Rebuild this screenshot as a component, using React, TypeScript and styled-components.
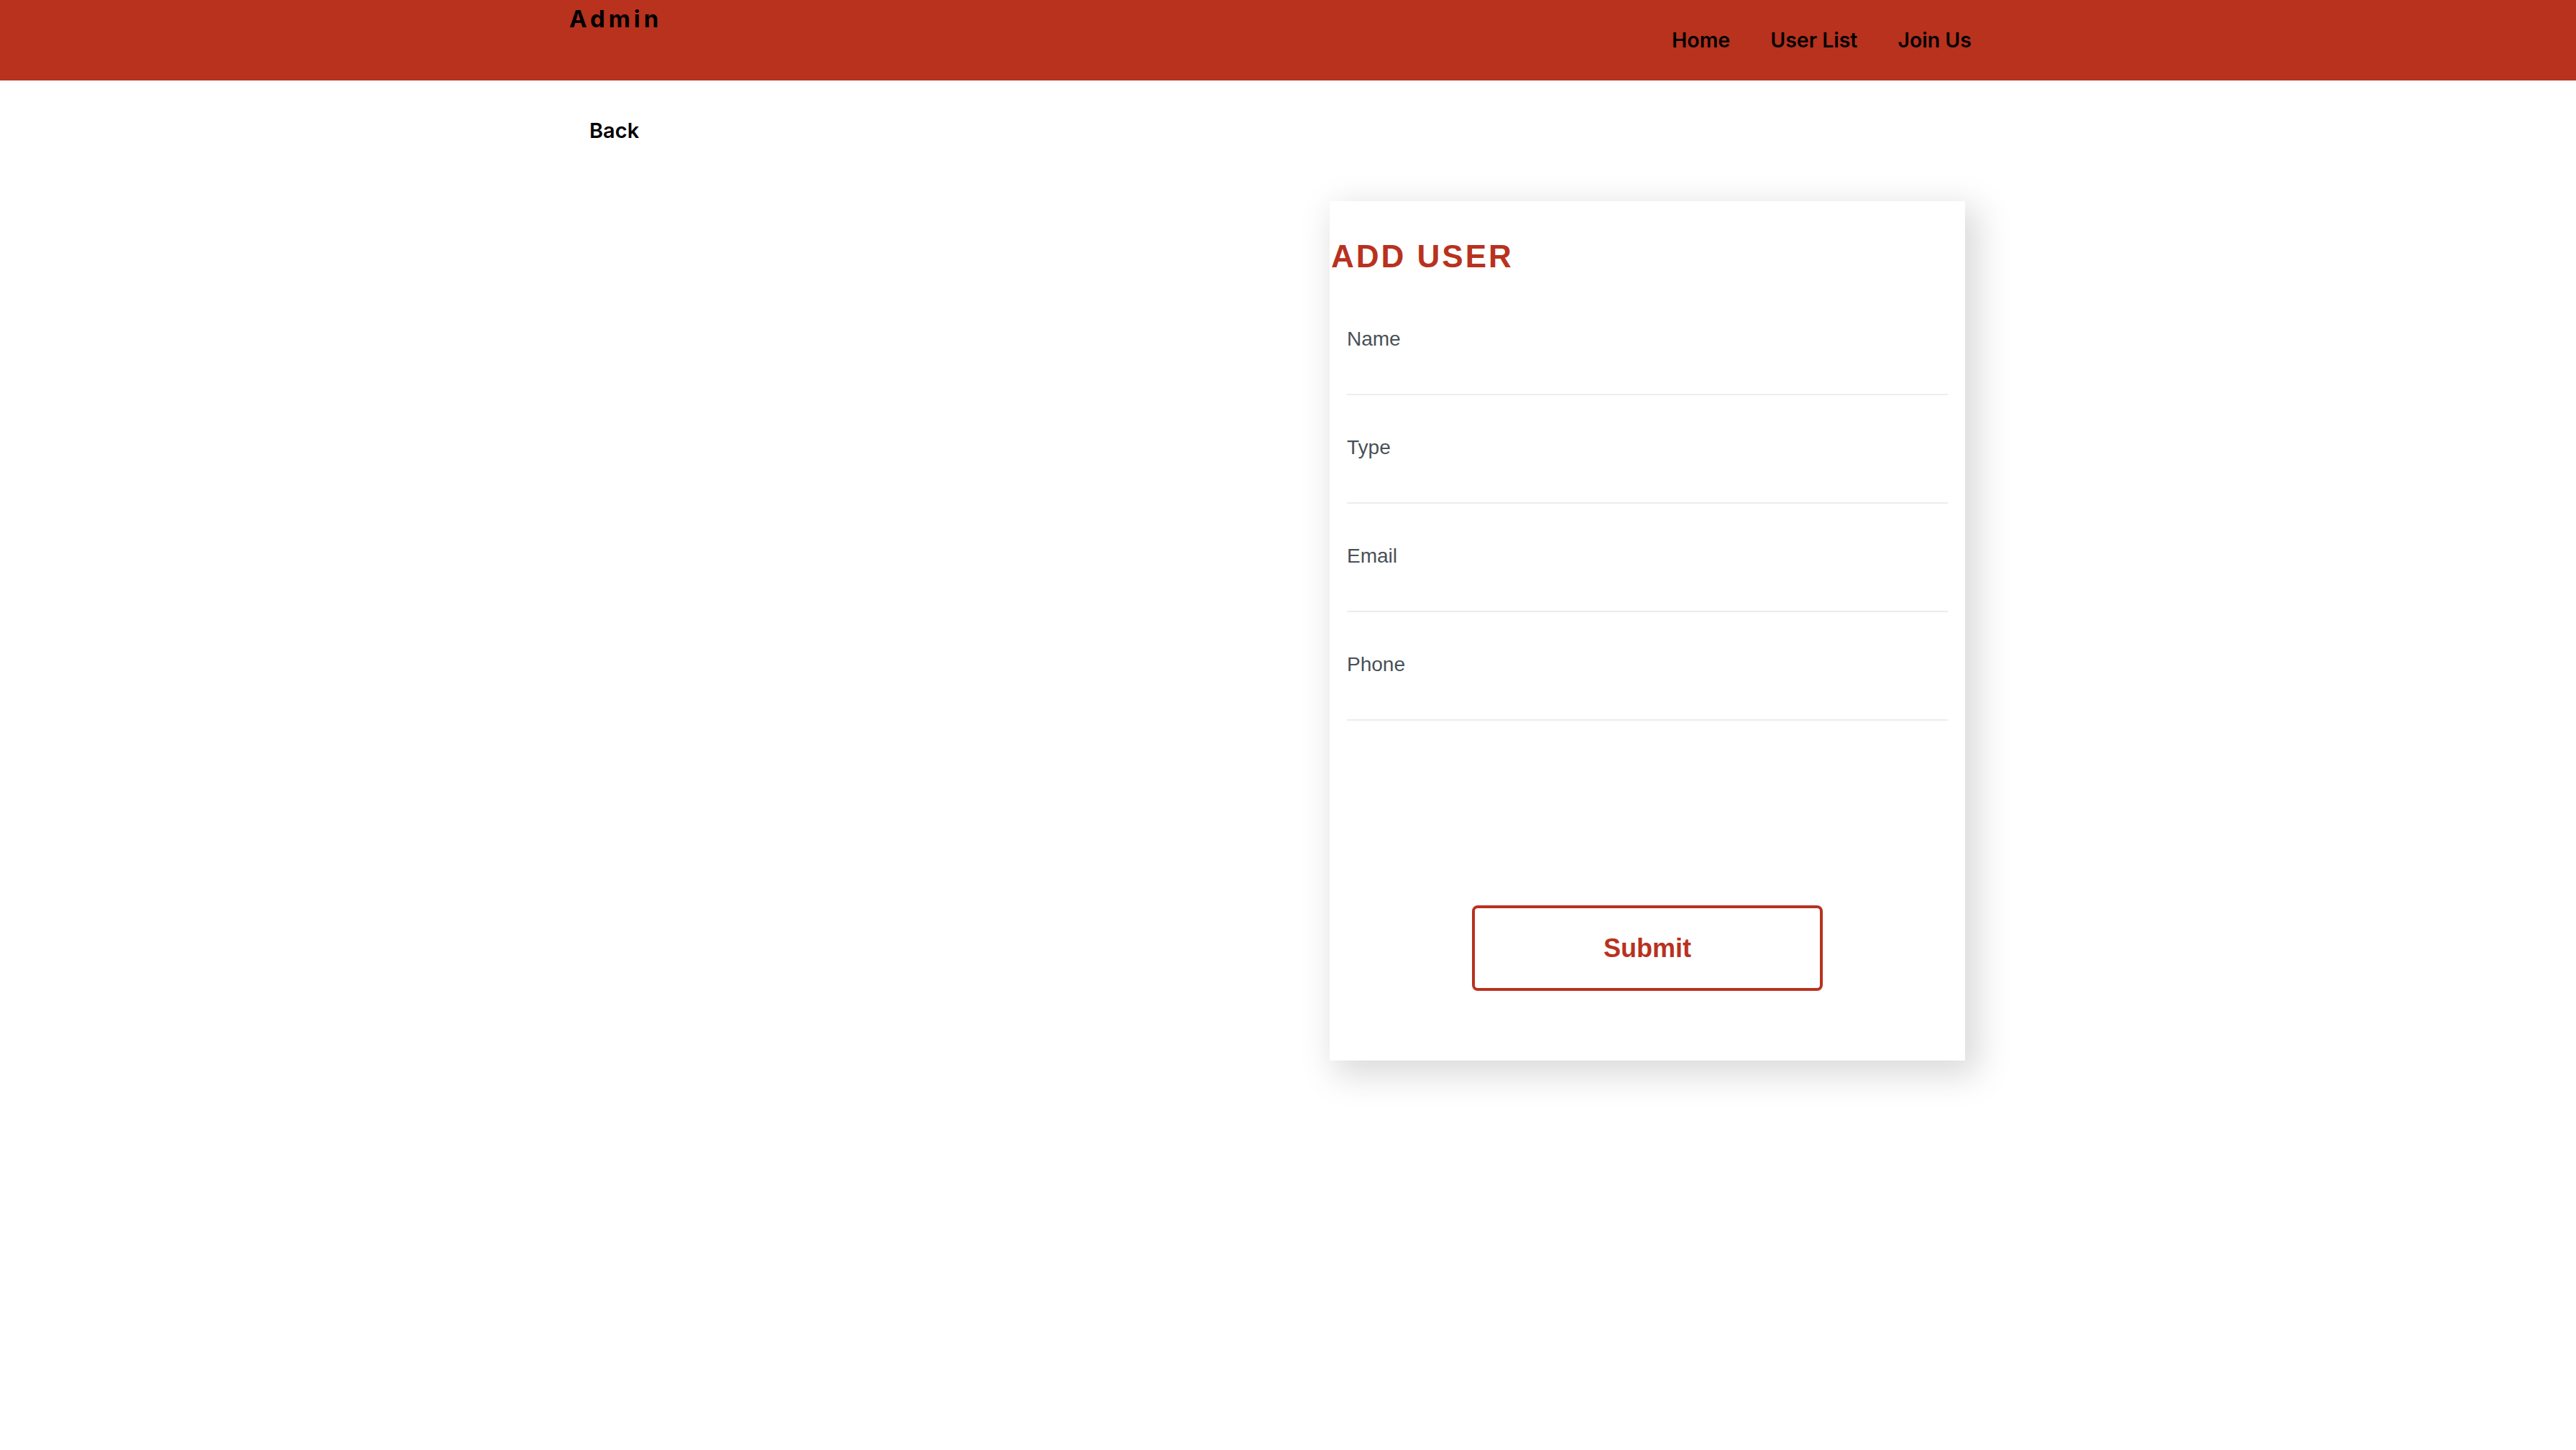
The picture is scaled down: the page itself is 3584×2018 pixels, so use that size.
import styled, { createGlobalStyle } from "styled-components";

const RED = "#b8321e";

const GlobalStyle = createGlobalStyle`
  body {
    margin: 0;
    background: #fff;
    font-family: "Liberation Sans", Arial, sans-serif;
  }
  * {
    box-sizing: border-box;
  }
`;

const fields = ["Name", "Type", "Email", "Phone"];

const App = () => {
  return (
    <>
      <GlobalStyle />
      <Header>
        <Container>
          <HeaderRow>
            <Logo>Admin</Logo>
            <Nav>
              <NavLink href="#">Home</NavLink>
              <NavLink href="#">User List</NavLink>
              <NavLink href="#">Join Us</NavLink>
            </Nav>
          </HeaderRow>
        </Container>
      </Header>
      <Container>
        <BackLink href="#">Back</BackLink>
        <Content>
          <div />
          <Card>
            <Title>ADD USER</Title>
            <Form onSubmit={(e) => e.preventDefault()}>
              {fields.map((f) => (
                <Field key={f}>
                  <Label htmlFor={f}>{f}</Label>
                  <Input id={f} type="text" />
                </Field>
              ))}
              <SubmitButton type="submit">Submit</SubmitButton>
            </Form>
          </Card>
        </Content>
      </Container>
    </>
  );
};

const Header = styled.header`
  height: 112px;
  background: ${RED};
`;

const Container = styled.div`
  width: 2000px;
  margin: 0 auto;
`;

const HeaderRow = styled.div`
  height: 112px;
  display: flex;
  justify-content: space-between;
  align-items: flex-start;
  padding-right: 49px;
`;

const Logo = styled.a`
  font-family: Inter, "Open Sans", sans-serif;
  font-weight: 700;
  font-size: 33px;
  line-height: 40px;
  letter-spacing: 5px;
  color: #000;
  padding-top: 6px;
`;

const Nav = styled.nav`
  height: 112px;
  display: flex;
  align-items: center;
  gap: 56px;
`;

const NavLink = styled.a`
  font-family: Inter, "Open Sans", sans-serif;
  font-weight: 600;
  font-size: 28.5px;
  line-height: 32px;
  color: #000;
  text-decoration: none;
`;

const BackLink = styled.a`
  display: inline-block;
  margin: 54px 0 0 28px;
  font-family: Inter, "Open Sans", sans-serif;
  font-weight: 600;
  font-size: 29px;
  line-height: 32px;
  color: #000;
  text-decoration: none;
`;

const Content = styled.div`
  display: grid;
  grid-template-columns: 1fr 884px;
  padding-right: 58px;
  margin-top: 82px;
  padding-bottom: 120px;
`;

const Card = styled.section`
  background: #fff;
  padding: 52px 0 97px;
  box-shadow: 12px 14px 45px 6px rgba(0, 0, 0, 0.15);
`;

const Title = styled.h2`
  margin: 0;
  padding-left: 2px;
  font-size: 44px;
  line-height: 50px;
  font-weight: 700;
  letter-spacing: 3px;
  color: ${RED};
`;

const Form = styled.form`
  display: flex;
  flex-direction: column;
  margin-top: 74px;
  padding: 0 24px 0 24px;
`;

const Field = styled.div`
  display: flex;
  flex-direction: column;
  margin-bottom: 57px;
`;

const Label = styled.label`
  font-size: 28px;
  line-height: 32px;
  color: #495057;
`;

const Input = styled.input`
  height: 62px;
  border: none;
  border-bottom: 2px solid #ececec;
  outline: none;
  font-size: 28px;
  font-family: inherit;
  padding: 0;
  background: transparent;
`;

const SubmitButton = styled.button`
  align-self: center;
  margin-top: 200px;
  width: 488px;
  height: 119px;
  border: 4px solid ${RED};
  border-radius: 8px;
  background: #fff;
  color: ${RED};
  font-family: "Liberation Sans", Arial, sans-serif;
  font-weight: 700;
  font-size: 36px;
  cursor: pointer;
`;

export default App;
